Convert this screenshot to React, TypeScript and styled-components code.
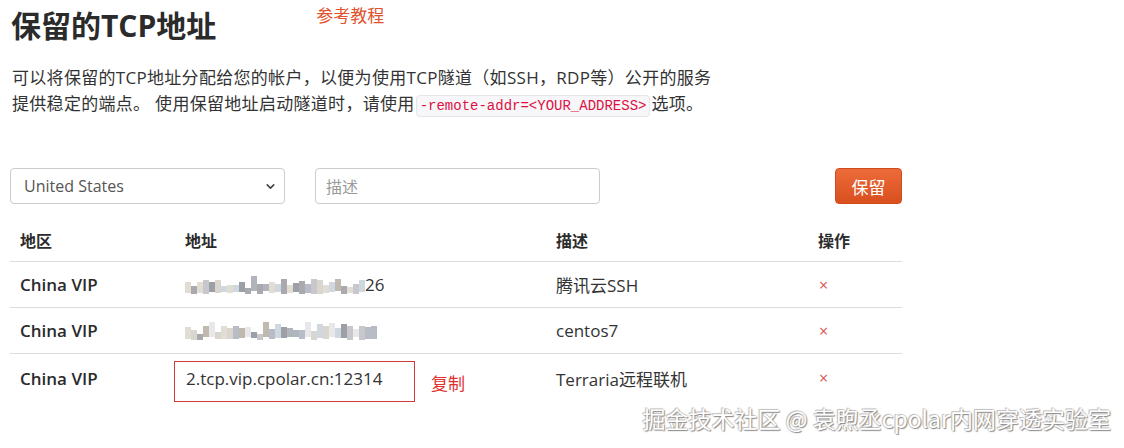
import React from "react";
import styled, { createGlobalStyle } from "styled-components";
import { ChevronDown } from "lucide-react";

const Global = createGlobalStyle`
  html, body { margin: 0; padding: 0; background: #fff; }
  body {
    font-family: "Open Sans", "Noto Sans CJK SC", sans-serif;
    color: #333;
    font-size: 16px;
  }
`;

const Page = styled.div`
  position: relative;
  width: 1124px;
  height: 448px;
  overflow: hidden;
  padding: 0 0 0 10px;
  box-sizing: border-box;
`;

const TitleRow = styled.div`
  display: flex;
  align-items: flex-start;
  gap: 100px;
  padding-top: 8px;
`;

const Title = styled.h1`
  margin: 0 0 0 1px;
  font-size: 30px;
  line-height: 36px;
  font-weight: 700;
  color: #2b2b2b;
`;

const GuideLink = styled.a`
  font-size: 17px;
  line-height: 20px;
  color: #e0522c;
  text-decoration: none;
  margin-top: -2px;
`;

const Intro = styled.p`
  margin: 21px 0 0 2px;
  font-size: 17px;
  line-height: 26px;
  letter-spacing: 0.3px;
  color: #333;
`;

const Code = styled.code`
  font-family: "Liberation Mono", "DejaVu Sans Mono", monospace;
  font-size: 14px;
  letter-spacing: 0;
  color: #dd1144;
  background: #f7f7f9;
  border: 1px solid #e5e5ea;
  border-radius: 4px;
  padding: 2px 3px;
  margin: 0 1px 0 1px;
`;

const Controls = styled.div`
  display: flex;
  align-items: center;
  width: 892px;
  margin-top: 49px;
`;

const Select = styled.div`
  box-sizing: border-box;
  width: 275px;
  height: 36px;
  border: 1px solid #ccc;
  border-radius: 4px;
  display: flex;
  align-items: center;
  justify-content: space-between;
  padding: 0 7px 0 13px;
  font-size: 16px;
  color: #555;
`;

const Input = styled.div`
  box-sizing: border-box;
  width: 285px;
  height: 36px;
  margin-left: 30px;
  border: 1px solid #ccc;
  border-radius: 4px;
  display: flex;
  align-items: center;
  padding: 0 10px;
  font-size: 16px;
  color: #999;
`;

const Button = styled.button`
  margin-left: auto;
  box-sizing: border-box;
  width: 67px;
  height: 36px;
  border: 1px solid #cf4a1c;
  border-radius: 4px;
  background: linear-gradient(#ec6b3a, #d94f1e);
  color: #fff;
  font-family: inherit;
  font-size: 17px;
  cursor: pointer;
`;

const Table = styled.div`
  width: 892px;
  margin-top: 14px;
`;

const Row = styled.div<{ $head?: boolean; $last?: boolean }>`
  display: grid;
  grid-template-columns: 165px 371px 262px 94px;
  align-items: center;
  height: ${(p) => (p.$head ? "44px" : "46px")};
  border-bottom: ${(p) => (p.$last ? "none" : "1px solid #dcdcdc")};
  box-sizing: border-box;
`;

const Cell = styled.div<{ $bold?: boolean }>`
  padding-left: 10px;
  font-size: 17px;
  font-weight: ${(p) => (p.$bold ? 600 : 400)};
  color: ${(p) => (p.$bold ? "#2b2b2b" : "#333")};
  display: flex;
  align-items: center;
  white-space: nowrap;
`;

const HeadCell = styled(Cell)`
  font-size: 16px;
  font-weight: 700;
  color: #2b2b2b;
`;

const Del = styled.span`
  color: #d9534f;
  font-size: 16px;
  margin-left: 1px;
`;

const Mosaic = styled.span`
  display: inline-flex;
  align-items: flex-end;
  height: 18px;
`;

const Pixel = styled.span<{ $c: string; $h: number; $o: number }>`
  display: inline-block;
  width: 6px;
  height: ${(p) => p.$h}px;
  margin-bottom: ${(p) => p.$o}px;
  background: ${(p) => p.$c};
`;

const CopyBox = styled.div`
  box-sizing: border-box;
  margin: 7px 0 0 -11px;
  width: 241px;
  height: 41px;
  border: 1px solid #d23b3b;
  padding: 0 0 6px 11px;
  display: flex;
  align-items: center;
  font-size: 17px;
  color: #333;
`;

const CopyLabel = styled.span`
  color: #e0302e;
  font-size: 17px;
  margin: 8px 0 0 16px;
`;

const Watermark = styled.div`
  position: absolute;
  right: 13px;
  bottom: 13px;
  font-family: "Noto Sans CJK SC", sans-serif;
  font-size: 23px;
  color: #fff;
  text-shadow: 1px 1px 1px #8a8a8a, -1px -1px 0 #c4c4c4, 0 0 2px #999;
`;

const palette = ["#c8c8cc", "#a9a9ae", "#d9d6cf", "#b8bcc6", "#e2ddd2", "#9d9fa6", "#cfd8e0", "#bfb9ae", "#e8e8ea", "#b0b4bb"];

function makeMosaic(n: number, seed: number) {
  const out: { c: string; h: number; o: number }[] = [];
  let s = seed;
  for (let i = 0; i < n; i++) {
    s = (s * 9301 + 49297) % 233280;
    const r = s / 233280;
    s = (s * 9301 + 49297) % 233280;
    const r2 = s / 233280;
    out.push({ c: palette[Math.floor(r * palette.length)], h: 6 + Math.floor(r2 * 10), o: Math.floor(r * 4) });
  }
  return out;
}

const m1 = makeMosaic(30, 7);
const m2 = makeMosaic(32, 31);

const Blur = ({ data, tail }: { data: { c: string; h: number; o: number }[]; tail?: string }) => (
  <>
    <Mosaic>
      {data.map((p, i) => (
        <Pixel key={i} $c={p.c} $h={p.h} $o={p.o} />
      ))}
    </Mosaic>
    {tail}
  </>
);

export default function App() {
  return (
    <>
      <Global />
      <Page>
        <TitleRow>
          <Title>保留的TCP地址</Title>
          <GuideLink href="#">参考教程</GuideLink>
        </TitleRow>
        <Intro>
          可以将保留的TCP地址分配给您的帐户，以便为使用TCP隧道（如SSH，RDP等）公开的服务
          <br />
          提供稳定的端点。 使用保留地址启动隧道时，请使用<Code>-remote-addr=&lt;YOUR_ADDRESS&gt;</Code>选项。
        </Intro>
        <Controls>
          <Select>
            <span>United States</span>
            <ChevronDown size={13} strokeWidth={3} color="#444" />
          </Select>
          <Input>描述</Input>
          <Button>保留</Button>
        </Controls>
        <Table>
          <Row $head>
            <HeadCell>地区</HeadCell>
            <HeadCell>地址</HeadCell>
            <HeadCell>描述</HeadCell>
            <HeadCell>操作</HeadCell>
          </Row>
          <Row>
            <Cell $bold>China VIP</Cell>
            <Cell>
              <Blur data={m1} tail="26" />
            </Cell>
            <Cell>腾讯云SSH</Cell>
            <Cell>
              <Del>×</Del>
            </Cell>
          </Row>
          <Row>
            <Cell $bold>China VIP</Cell>
            <Cell>
              <Blur data={m2} />
            </Cell>
            <Cell>centos7</Cell>
            <Cell>
              <Del>×</Del>
            </Cell>
          </Row>
          <Row $last>
            <Cell $bold>China VIP</Cell>
            <Cell>
              <CopyBox>2.tcp.vip.cpolar.cn:12314</CopyBox>
              <CopyLabel>复制</CopyLabel>
            </Cell>
            <Cell>Terraria远程联机</Cell>
            <Cell>
              <Del>×</Del>
            </Cell>
          </Row>
        </Table>
        <Watermark>掘金技术社区 @ 袁煦丞cpolar内网穿透实验室</Watermark>
      </Page>
    </>
  );
}
